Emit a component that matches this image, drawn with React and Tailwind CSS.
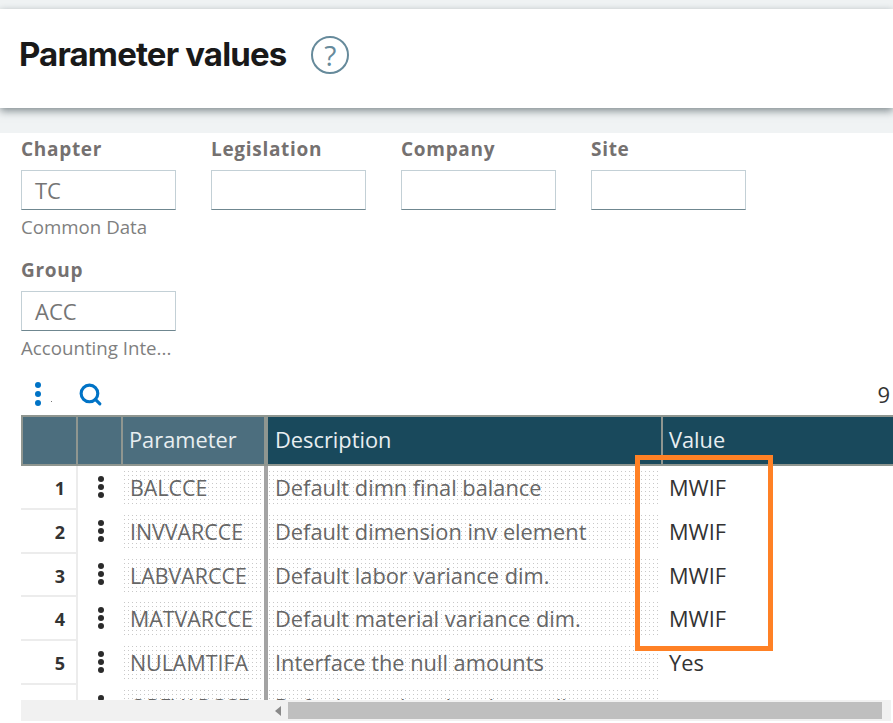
import { Search } from "lucide-react";

const rows = [
  { n: 1, param: "BALCCE", desc: "Default dimn final balance", value: "MWIF" },
  { n: 2, param: "INVVARCCE", desc: "Default dimension inv element", value: "MWIF" },
  { n: 3, param: "LABVARCCE", desc: "Default labor variance dim.", value: "MWIF" },
  { n: 4, param: "MATVARCCE", desc: "Default material variance dim.", value: "MWIF" },
  { n: 5, param: "NULAMTIFA", desc: "Interface the null amounts", value: "Yes" },
  { n: 6, param: "OPEVARCCE", desc: "Default overhead variance dim.", value: "" },
];

const dots = "bg-[radial-gradient(circle_at_1.5px_1.5px,#c8c8c8_0.7px,transparent_0.8px)] bg-[length:4px_4px]";

function Field({ label, value, hint, className }) {
  return (
    <div className={className}>
      <div className="text-[19px] leading-[26px] font-bold tracking-[0.7px] text-[#757170]">{label}</div>
      <div className="mt-[8px] h-[40px] w-[155px] border border-[#c3d0d6] border-b-[#6f8790] px-[13px] text-[22px] leading-[38px] text-[#757575]">{value}</div>
      {hint && <div className="mt-[5px] text-[18.7px] leading-[24px] text-[#7f7f7f]">{hint}</div>}
    </div>
  );
}

function Dots({ className }) {
  return (
    <div className={"flex flex-col items-center " + className}>
      <span className="rounded-full bg-current" />
      <span className="rounded-full bg-current" />
      <span className="rounded-full bg-current" />
    </div>
  );
}

export default function App() {
  return (
    <div className="relative flex h-[723px] w-[893px] flex-col overflow-hidden bg-white font-['Open_Sans',sans-serif]">
      <div className="h-[9px] bg-[#f0f3f4]" />
      <div className="relative flex h-[99px] items-center bg-white pb-[7px] pl-[19px] shadow-[0_3px_8px_rgba(70,85,90,0.65)]">
        <h1 className="font-['Inter',sans-serif] text-[33px] font-bold tracking-[-0.85px] text-[#191919]">Parameter values</h1>
        <div className="ml-[25px] flex size-[38px] items-center justify-center rounded-full border-2 border-[#668a9b] text-[28px] text-[#668a9b]">?</div>
      </div>
      <div className="h-[25px] bg-[#f0f3f4]" />

      <div className="flex pl-[21px] pt-[3px]">
        <Field className="w-[190px]" label="Chapter" value="TC" hint="Common Data" />
        <Field className="w-[190px]" label="Legislation" />
        <Field className="w-[190px]" label="Company" />
        <Field className="w-[190px]" label="Site" />
      </div>
      <div className="mt-[18px] pl-[21px]">
        <Field label="Group" value="ACC" hint="Accounting Inte..." />
      </div>

      <div className="mt-[13px] flex h-[42px] items-center pl-[21px] pr-[3px]">
        <Dots className="ml-[14px] gap-[3px] text-[#0073c6] [&>span]:size-[6px]" />
        <span className="ml-[10px] mt-[14px] size-[1px] bg-[#777]" />
        <Search className="ml-[26px] mt-[1px] text-[#0073c6]" size={25} strokeWidth={3} />
        <span className="ml-auto text-[22px] text-[#333]">9</span>
      </div>

      <div className="ml-[21px] flex h-[51px] shrink-0 border-y-2 border-[#8f9690] text-[21.8px] leading-[45px] text-[#e8eef1]">
        <div className="w-[57px] border-x-2 border-[#8f9690] bg-[#4c6e7e]" />
        <div className="w-[45px] border-r-2 border-[#8f9690] bg-[#4c6e7e]" />
        <div className="w-[145px] border-r-4 border-[#8f9690] bg-[#4c6e7e] pl-[6px]">Parameter</div>
        <div className="w-[395px] border-r-2 border-[#8f9690] bg-[#19495c] pl-[7px]">Description</div>
        <div className="flex-1 bg-[#19495c] pl-[6px]">Value</div>
      </div>

      <div className="ml-[21px] min-h-0 flex-1 overflow-hidden">
        {rows.map((r) => (
          <div key={r.n} className="flex h-[43.75px] text-[21.8px] leading-[36px]">
            <div className="w-[57px] shrink-0 border-b-2 border-r-2 border-[#ececec] pr-[11px] text-right text-[18px] leading-[44px] font-bold text-[#333]">{r.n}</div>
            <div className="flex w-[45px] shrink-0 items-center justify-center pb-[2px] pl-[1px] text-[#2b2b2b]">
              <Dots className="gap-[2px] [&>span]:size-[6px]" />
            </div>
            <div className={"my-[4px] mr-[2px] h-[35px] w-[139px] shrink-0 pl-[7px] text-[21.4px] text-[#666] " + dots}>{r.param}</div>
            <div className="w-[4px] shrink-0 bg-[#a3a3a3]" />
            <div className={"my-[4px] h-[35px] w-[391px] shrink-0 pl-[7px] text-[#666] " + dots}>{r.desc}</div>
            <div className="pl-[10px] pt-[4px] text-[#333]">{r.value}</div>
          </div>
        ))}
      </div>

      <div className="mb-[2px] ml-[21px] mr-[2px] flex h-[21px] shrink-0 items-center bg-[#f1f1f1]">
        <div className="ml-[254px] mr-[7px] h-0 w-0 border-y-[5px] border-r-[6px] border-y-transparent border-r-[#8a8a8a]" />
        <div className="h-[17px] w-[594px] bg-[#bfbfbf]" />
      </div>

      <div className="absolute left-[635px] top-[455px] h-[196px] w-[138px] border-[5px] border-[#ff8125]" />
    </div>
  );
}
